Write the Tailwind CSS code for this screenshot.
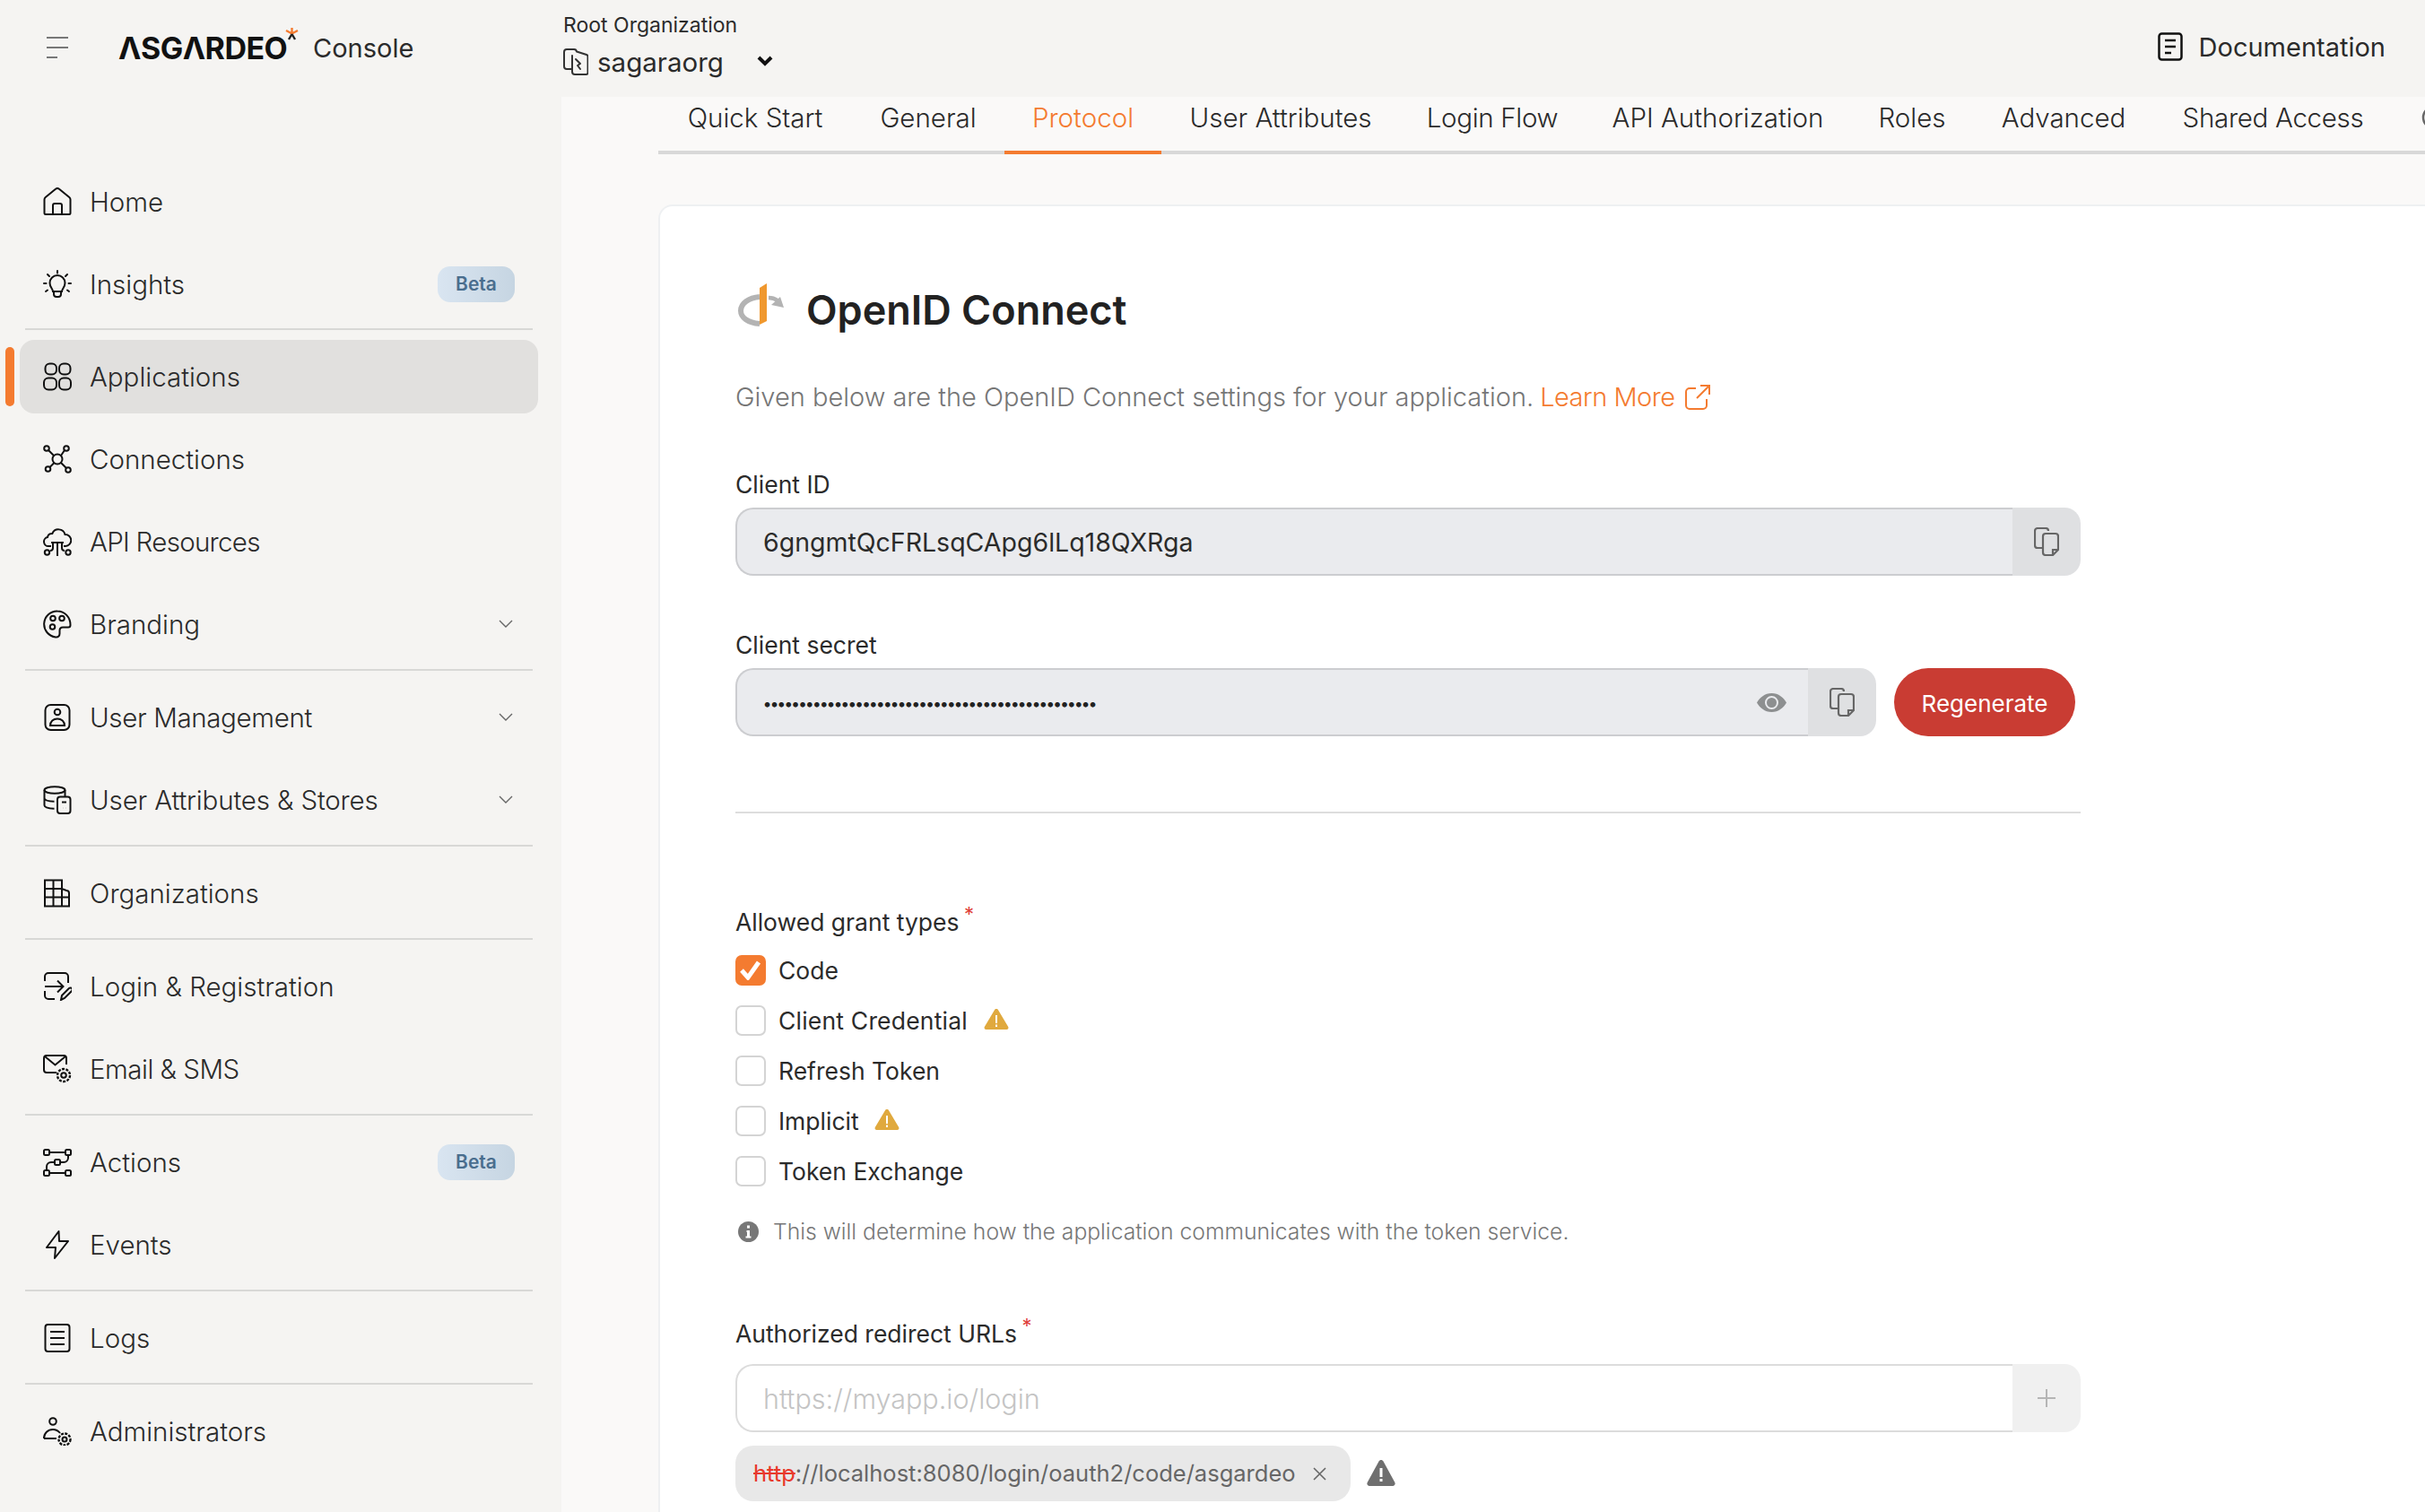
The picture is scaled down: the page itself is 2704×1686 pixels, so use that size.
<!DOCTYPE html>
<html lang="en">
<head>
    <meta charset="UTF-8">
    <title>Asgardeo Console</title>
    <script src="https://cdn.jsdelivr.net/npm/@tailwindcss/browser@4"></script>
</head>
<body class="bg-[#f5f4f2] font-['Inter',sans-serif] font-light text-[#2b2b2b] antialiased">
<div class="w-[2704px] h-[1686px] overflow-hidden flex flex-col">

    <!-- Top bar -->
    <header class="h-[108px] shrink-0 flex">
        <div class="w-[628px] shrink-0 flex items-center pl-[52px]">
            <div class="w-[24px] flex flex-col gap-[9px] mt-[-2px]">
                <span class="block h-[2px] w-[24px] bg-[#777]"></span>
                <span class="block h-[2px] w-[24px] bg-[#777]"></span>
                <span class="block h-[2px] w-[12px] bg-[#777]"></span>
            </div>
            <div class="relative ml-[56px] flex items-center">
                <span class="w-[190px] text-[34px] leading-none font-bold text-[#111] tracking-[-0.5px]" aria-label="Asgardeo">ΛSGΛRDEO</span>
                <svg class="absolute left-[186px] top-[-6px]" width="15" height="15" viewBox="0 0 15 15" fill="none" stroke-width="2.4"><path d="M7.5 0v7M1 3l6.5 3.5L14 3" stroke="#f47b30"/><path d="M7.5 7 4 13M7.5 7l3.500 6" stroke="#222"/></svg>
                <span class="ml-[27px] text-[29px] font-normal leading-none -mt-[2px]">Console</span>
            </div>
        </div>
        <div class="flex-1 flex justify-between">
            <div class="pt-[15px]">
                <div class="text-[23px] leading-[26px] font-normal">Root Organization</div>
                <div class="flex items-center mt-[13px]">
                    <svg width="28" height="30" viewBox="0 0 28 30" fill="none" stroke="#333" stroke-width="2" stroke-linecap="round" stroke-linejoin="round"><path d="M10 23H4a3 3 0 0 1-3-3V4a3 3 0 0 1 3-3h8a3 3 0 0 1 3 2.500l11 3.500c1 .3 1.500 1 1.500 2v18a2 2 0 0 1-2 2H13a3 3 0 0 1-3-3V8"/><path d="M14 12l5 5-3 2 3 4"/></svg>
                    <span class="ml-[10px] text-[29.500px] leading-[30px] font-normal">sagaraorg</span>
                    <svg class="ml-[37px] -mt-[2px]" width="18" height="12" viewBox="0 0 18 12" fill="none" stroke="#111" stroke-width="4"><path d="M2 2l7 7 7-7"/></svg>
                </div>
            </div>
            <div class="flex items-center pr-[44px] pb-[4px]">
                <svg width="28" height="32" viewBox="0 0 28 32" fill="none" stroke="#111" stroke-width="2.500"><rect x="1.500" y="1.500" width="25" height="29" rx="3"/><path d="M8 9h12M8 16h12M8 23h7"/></svg>
                <span class="ml-[18px] text-[29px] font-normal leading-none">Documentation</span>
            </div>
        </div>
    </header>

    <div class="flex-1 flex min-h-0">
        <!-- Sidebar -->
        <aside class="w-[626px] shrink-0 pt-[76px] pl-[22px] text-[29.500px]">
            <nav class="w-[578px] flex flex-col">
                <a class="h-[82px] flex items-center pl-[26px]">
                    <svg class="w-[32px] h-[32px] mr-[20px]" viewBox="0 0 32 32" fill="none" stroke="#111" stroke-width="2"><path d="M1.500 28.500V13.500c0-1 .4-1.800 1.200-2.500L14 1.800a3 3 0 0 1 4 0L29.300 11c.8.7 1.200 1.500 1.200 2.500v15a1.500 1.500 0 0 1-1.500 1.500H3a1.500 1.500 0 0 1-1.500-1.500z"/><path d="M11 30V20a2 2 0 0 1 2-2h6a2 2 0 0 1 2 2v10"/></svg>
                    <span>Home</span>
                </a>
                <a class="h-[82px] mt-[10px] flex items-center pl-[26px] pr-[26px]">
                    <svg class="w-[32px] h-[32px] mr-[20px]" viewBox="0 0 32 32" fill="none" stroke="#111" stroke-width="2" stroke-linecap="round"><path d="M11 24c0-3-3.500-4.500-3.500-9.500a8.500 8.500 0 0 1 17 0C24.500 19.500 21 21 21 24z"/><path d="M12 24v3a3 3 0 0 0 3 3h2a3 3 0 0 0 3-3v-3M16 1v2.500M5 5l2 2M27 5l-2 2M1 15h2.500M28.500 15H31M3 24l2-1.500M29 24l-2-1.500"/></svg>
                    <span class="flex-1">Insights</span>
                    <span class="w-[86px] h-[40px] rounded-[14px] bg-gradient-to-r from-[#d9e5f1] to-[#c6d5e2] flex items-center justify-center text-[21px] font-semibold text-[#4a6e8e]">Beta</span>
                </a>
                <div class="h-[2px] ml-[6px] w-[566px] bg-[#d8d8d6] mt-[8px] mb-[11px]"></div>
                <a class="relative h-[82px] flex items-center pl-[26px] rounded-[16px] bg-[#e1e0de]">
                    <span class="absolute left-[-16px] top-[8px] w-[10px] h-[66px] rounded-[5px] bg-[#f47b30]"></span>
                    <svg class="w-[32px] h-[32px] mr-[20px]" viewBox="0 0 32 32" fill="none" stroke="#111" stroke-width="2"><rect x="2.500" y="1.500" width="12.500" height="12" rx="5"/><rect x="18" y="1.500" width="12.500" height="12" rx="5"/><rect x="1" y="17.500" width="14" height="13" rx="5"/><rect x="18" y="17.500" width="13" height="13" rx="5"/></svg>
                    <span>Applications</span>
                </a>
                <a class="h-[82px] mt-[10px] flex items-center pl-[26px]">
                    <svg class="w-[32px] h-[32px] mr-[20px]" viewBox="0 0 32 32" fill="none" stroke="#111" stroke-width="2"><circle cx="16" cy="16" r="5.500"/><circle cx="4" cy="4" r="2.800"/><circle cx="26" cy="4" r="2.800"/><circle cx="5.500" cy="27" r="2.800"/><circle cx="28" cy="28" r="2.800"/><path d="M6 6l6 6M24 6l-4 6M7.500 25l5-5M26 26l-6-6"/></svg>
                    <span>Connections</span>
                </a>
                <a class="h-[82px] mt-[10px] flex items-center pl-[26px]">
                    <svg class="w-[32px] h-[32px] mr-[20px]" viewBox="0 0 32 32" fill="none" stroke="#111" stroke-width="2"><path d="M9 21H6a5 5 0 0 1-1-9.900 5 5 0 0 1 5-4.100h.3A7.500 7.500 0 0 1 24.500 8 6.500 6.500 0 0 1 25 21h-2"/><path d="M9 17h14M16 17v15M11 17v6a3 3 0 0 1-3 3M21 17v6a3 3 0 0 0 3 3"/><circle cx="4.500" cy="28" r="2.700"/><circle cx="28" cy="28" r="2.700"/></svg>
                    <span class="tracking-[-0.7px]">API Resources</span>
                </a>
                <a class="h-[82px] mt-[10px] flex items-center pl-[26px] pr-[28px]">
                    <svg class="w-[32px] h-[32px] mr-[20px]" viewBox="0 0 32 32" fill="none" stroke="#111" stroke-width="2"><path d="M16 1.500a14.500 14.500 0 0 0-2 28.900c3 .4 4.500-1.400 4.500-3.900v-3.500c0-2 1.500-3.500 3.500-3.500h6c1.500 0 2.500-1 2.500-2.500C30.500 8 24 1.500 16 1.500z"/><circle cx="11" cy="9.500" r="2.800"/><circle cx="21" cy="9.500" r="2.800"/><circle cx="10.500" cy="19" r="2.800"/></svg>
                    <span class="flex-1">Branding</span>
                    <svg width="16" height="10" viewBox="0 0 16 10" fill="none" stroke="#666" stroke-width="1.400"><path d="M1 1l7 7 7-7"/></svg>
                </a>
                <div class="h-[2px] ml-[6px] w-[566px] bg-[#d8d8d6] mt-[9px] mb-[11px]"></div>
                <a class="h-[82px] flex items-center pl-[26px] pr-[28px]">
                    <svg class="w-[32px] h-[32px] mr-[20px]" viewBox="0 0 32 32" fill="none" stroke="#111" stroke-width="2"><rect x="2.500" y="2" width="27" height="28" rx="6"/><circle cx="16" cy="10" r="3.300"/><path d="M8 25c0-4.500 3.500-7.500 8-7.500s8 3 8 7.500z"/></svg>
                    <span class="flex-1 tracking-[-0.35px]">User Management</span>
                    <svg width="16" height="10" viewBox="0 0 16 10" fill="none" stroke="#666" stroke-width="1.400"><path d="M1 1l7 7 7-7"/></svg>
                </a>
                <a class="h-[82px] mt-[10px] flex items-center pl-[26px] pr-[28px]">
                    <svg class="w-[32px] h-[32px] mr-[20px]" viewBox="0 0 32 32" fill="none" stroke="#111" stroke-width="2"><ellipse cx="13" cy="5" rx="11.500" ry="3.800"/><path d="M24.500 5v7M1.500 5v17c0 2 3 3.300 11 3.800M1.500 14c0 2 4 3.500 11 3.800"/><rect x="16" y="12.500" width="14.500" height="18.500" rx="3"/><path d="M21 18.500h5M22 25h.100M25.500 25h.100"/></svg>
                    <span class="flex-1 tracking-[-0.15px]">User Attributes &amp; Stores</span>
                    <svg width="16" height="10" viewBox="0 0 16 10" fill="none" stroke="#666" stroke-width="1.400"><path d="M1 1l7 7 7-7"/></svg>
                </a>
                <div class="h-[2px] ml-[6px] w-[566px] bg-[#d8d8d6] mt-[9px] mb-[11px]"></div>
                <a class="h-[82px] flex items-center pl-[26px]">
                    <svg class="w-[32px] h-[32px] mr-[20px]" viewBox="0 0 32 32" fill="none" stroke="#111" stroke-width="2"><path d="M2 1.500h19V30.500H2zM2 11h19M2 20.500h19M11.500 1.500v29M21 11l5 2a3 3 0 0 1 3 3v14.500h-8M21 20.500h8"/></svg>
                    <span>Organizations</span>
                </a>
                <div class="h-[2px] ml-[6px] w-[566px] bg-[#d8d8d6] mt-[9px] mb-[11px]"></div>
                <a class="h-[82px] flex items-center pl-[26px]">
                    <svg class="w-[32px] h-[32px] mr-[20px]" viewBox="0 0 32 32" fill="none" stroke="#111" stroke-width="2"><path d="M2 10V5a4 4 0 0 1 4-4h18a4 4 0 0 1 4 4v7M2 21v5a4 4 0 0 0 4 4h7M2 16h20M16 9.500l6.500 6.500-6.500 6.500"/><path d="M20 31l1-5 8-8a2 2 0 0 1 3 3l-8 8z"/></svg>
                    <span>Login &amp; Registration</span>
                </a>
                <a class="h-[82px] mt-[10px] flex items-center pl-[26px]">
                    <svg class="w-[32px] h-[32px] mr-[20px]" viewBox="0 0 32 32" fill="none" stroke="#111" stroke-width="2"><path d="M15 20H4a3 3 0 0 1-3-3V4a3 3 0 0 1 3-3h19a3 3 0 0 1 3 3v7"/><path d="M2 2l11.500 9.500L25 2"/><circle cx="23" cy="23" r="2.800"/><circle cx="23" cy="23" r="7" stroke-width="2.400" stroke-dasharray="3 1.400"/></svg>
                    <span class="tracking-[-0.5px]">Email &amp; SMS</span>
                </a>
                <div class="h-[2px] ml-[6px] w-[566px] bg-[#d8d8d6] mt-[9px] mb-[11px]"></div>
                <a class="h-[82px] flex items-center pl-[26px] pr-[26px]">
                    <svg class="w-[32px] h-[32px] mr-[20px]" viewBox="0 0 32 32" fill="none" stroke="#111" stroke-width="2"><rect x="1" y="2" width="6" height="6" rx="1.500"/><rect x="25" y="2" width="6" height="6" rx="1.500"/><rect x="13" y="13" width="6" height="6" rx="1.500"/><rect x="1" y="25" width="6" height="6" rx="1.500"/><rect x="25" y="25" width="6" height="6" rx="1.500"/><path d="M7 5h18M7 28h18M28 8v3a5 5 0 0 1-5 5h-4M13 16H9a5 5 0 0 0-5 5v4"/></svg>
                    <span class="flex-1">Actions</span>
                    <span class="w-[86px] h-[40px] rounded-[14px] bg-gradient-to-r from-[#d9e5f1] to-[#c6d5e2] flex items-center justify-center text-[21px] font-semibold text-[#4a6e8e]">Beta</span>
                </a>
                <a class="h-[82px] mt-[10px] flex items-center pl-[26px]">
                    <svg class="w-[32px] h-[32px] mr-[20px]" viewBox="0 0 32 32" fill="none" stroke="#111" stroke-width="2" stroke-linejoin="round"><path d="M17.500 1L4 19h10l-1 12 15-19H18z"/></svg>
                    <span>Events</span>
                </a>
                <div class="h-[2px] ml-[6px] w-[566px] bg-[#d8d8d6] mt-[9px] mb-[11px]"></div>
                <a class="h-[82px] flex items-center pl-[26px]">
                    <svg class="w-[32px] h-[32px] mr-[20px]" viewBox="0 0 32 32" fill="none" stroke="#111" stroke-width="2"><rect x="2.500" y="1" width="27" height="30" rx="3"/><path d="M8 9h16M8 16h16M8 23h16"/></svg>
                    <span>Logs</span>
                </a>
                <div class="h-[2px] ml-[6px] w-[566px] bg-[#d8d8d6] mt-[9px] mb-[11px]"></div>
                <a class="h-[82px] flex items-center pl-[26px]">
                    <svg class="w-[32px] h-[32px] mr-[20px]" viewBox="0 0 32 32" fill="none" stroke="#111" stroke-width="2"><circle cx="11" cy="5" r="3.800"/><path d="M1 24c0-6 4.500-10 10-10 3.500 0 6 1.500 8 4M1 24h14"/><circle cx="24" cy="25" r="2.500"/><circle cx="24" cy="25" r="6.500" stroke-width="2.400" stroke-dasharray="3 1.300"/></svg>
                    <span>Administrators</span>
                </a>
            </nav>
        </aside>

        <!-- Main -->
        <main class="flex-1 min-w-0 bg-[#faf9f8] pl-[108px] flex flex-col">
            <div class="h-[64px] shrink-0 flex border-b-[4px] border-[#d8d8d8] text-[29.500px] whitespace-nowrap">
                <a class="w-[216px] shrink-0 flex items-center justify-center pb-[14px]">Quick Start</a>
                <a class="w-[170px] shrink-0 flex items-center justify-center pb-[14px]">General</a>
                <a class="w-[175px] shrink-0 h-[64px] flex items-center justify-center pb-[14px] text-[#f47b30] border-b-[4px] border-[#f47b30]">Protocol</a>
                <a class="w-[266px] shrink-0 flex items-center justify-center pb-[14px]">User Attributes</a>
                <a class="w-[206px] shrink-0 flex items-center justify-center pb-[14px] tracking-[-0.3px]">Login Flow</a>
                <a class="w-[297px] shrink-0 flex items-center justify-center pb-[14px]">API Authorization</a>
                <a class="w-[136px] shrink-0 flex items-center justify-center pb-[14px]">Roles</a>
                <a class="w-[202px] shrink-0 flex items-center justify-center pb-[14px]">Advanced</a>
                <a class="w-[265px] shrink-0 flex items-center justify-center pb-[14px] tracking-[-0.3px]">Shared Access</a>
                <a class="pl-[33px] shrink-0 flex items-center pb-[14px]">
                    <svg width="28" height="28" viewBox="0 0 28 28" fill="none" stroke="#666" stroke-width="2.500"><circle cx="14" cy="14" r="12"/></svg>
                </a>
            </div>

            <section class="mt-[56px] -mr-[40px] flex-1 bg-white rounded-tl-[16px] border-t-2 border-l-2 border-[#eef0f2] pl-[84px] pt-[91px] overflow-hidden">
                <div class="flex items-center h-[48px]">
                    <svg class="ml-[3px] -mt-[10px]" width="52" height="48" viewBox="0 0 52 48" fill="none"><path d="M24 15C12 16 3 22 3 30.500 3 38 11 44 24 45" stroke="#b3b3b3" stroke-width="6"/><path d="M34 16c3 0 7 1 10 3" stroke="#b3b3b3" stroke-width="4.500"/><path d="M51 27 37 24l10-9z" fill="#b3b3b3"/><path d="M24 5l8-5v42l-8 4z" fill="#f0982e"/></svg>
                    <h1 class="ml-[24px] text-[45px] font-semibold leading-none text-[#222]">OpenID Connect</h1>
                </div>
                <p class="mt-[58px] text-[29px] leading-[32px] text-[#767676] flex items-center">
                    Given below are the OpenID Connect settings for your application.
                    <span class="ml-[7px] text-[#f47b30] tracking-[-0.5px]">Learn More</span>
                    <svg class="ml-[11px]" width="28" height="28" viewBox="0 0 28 28" fill="none" stroke="#f47b30" stroke-width="2"><path d="M12 4H5a4 4 0 0 0-4 4v15a4 4 0 0 0 4 4h15a4 4 0 0 0 4-4v-7M17 1h10v10M27 1 13 15"/></svg>
                </p>

                <label class="block mt-[65px] text-[26.500px] leading-[32px] font-normal">Client ID</label>
                <div class="w-[1500px] h-[76px] mt-[10px] flex">
                    <div class="flex-1 flex items-center pl-[29px] pt-[2px] bg-[#eaebee] rounded-l-[20px] border-2 border-r-0 border-[#cccdd0] text-[28.500px] font-normal">6gngmtQcFRLsqCApg6lLq18QXRga</div>
                    <div class="w-[76px] flex items-center justify-center bg-[#dfe0e2] rounded-r-[18px]">
                        <svg width="28" height="32" viewBox="0 0 28 32" fill="none" stroke="#666" stroke-width="2.200"><path d="M9 23H4a3 3 0 0 1-3-3V4a3 3 0 0 1 3-3h9a3 3 0 0 1 3 3"/><path d="M10 10a3 3 0 0 1 3-3h11a3 3 0 0 1 3 3v15l-6 6h-8a3 3 0 0 1-3-3zM21 31v-6h6"/></svg>
                    </div>
                </div>

                <label class="block mt-[61px] text-[26.500px] leading-[32px] font-normal">Client secret</label>
                <div class="h-[76px] mt-[10px] flex">
                    <div class="w-[1196px] flex items-center pl-[29px] pr-[24px] bg-[#eaebee] rounded-l-[20px] border-2 border-r-0 border-[#cccdd0]">
                        <span class="flex-1 pt-[2px] text-[18px] tracking-[-1.17px] font-semibold text-[#222]">•••••••••••••••••••••••••••••••••••••••••••••••</span>
                        <svg width="33" height="21" viewBox="0 0 33 21" fill="#8d8f90"><path fill-rule="evenodd" d="M16.500 0C24 0 30 5 33 10.500 30 16 24 21 16.500 21S3 16 0 10.500C3 5 9 0 16.500 0zm0 3a7.500 7.500 0 1 0 0 15 7.500 7.500 0 0 0 0-15z"/><circle cx="16.500" cy="10.500" r="5.500"/></svg>
                    </div>
                    <div class="w-[76px] flex items-center justify-center bg-[#dfe0e2] rounded-r-[18px]">
                        <svg width="28" height="32" viewBox="0 0 28 32" fill="none" stroke="#666" stroke-width="2.200"><path d="M9 23H4a3 3 0 0 1-3-3V4a3 3 0 0 1 3-3h9a3 3 0 0 1 3 3"/><path d="M10 10a3 3 0 0 1 3-3h11a3 3 0 0 1 3 3v15l-6 6h-8a3 3 0 0 1-3-3zM21 31v-6h6"/></svg>
                    </div>
                    <button class="ml-[20px] w-[202px] pt-[2px] rounded-full bg-[#c93c33] text-white text-[26px] font-normal">Regenerate</button>
                </div>

                <div class="w-[1500px] h-[2px] bg-[#dddddd] mt-[84px]"></div>

                <div class="mt-[105px] text-[26.500px] leading-[32px] font-normal">Allowed grant types <sup class="text-[#e0413a] text-[22px] -ml-[2px]">*</sup></div>
                <div class="mt-[21px] flex flex-col gap-[22px] text-[26.500px] font-normal">
                    <div class="flex items-center h-[34px]">
                        <span class="w-[34px] h-[34px] rounded-[7px] bg-[#f47b30] flex items-center justify-center">
                            <svg width="24" height="22" viewBox="0 0 24 22" fill="none" stroke="#fff" stroke-width="5"><path d="M2 11l7 8L21 2"/></svg>
                        </span>
                        <span class="ml-[14px] pt-[1px]">Code</span>
                    </div>
                    <div class="flex items-center h-[34px]">
                        <span class="w-[34px] h-[34px] rounded-[7px] border-2 border-[#d4d4d4]"></span>
                        <span class="ml-[14px] pt-[1px] tracking-[0.2px]">Client Credential</span>
                        <svg class="ml-[18px] -mt-[3px]" width="28" height="23" viewBox="0 0 28 23"><path fill="#e0a93e" d="M14 0c1 0 1.700.5 2.200 1.400l11 18.500c.8 1.500-.2 3.100-1.800 3.100H2.600C1 23 0 21.400.8 19.900l11-18.500C12.300.5 13 0 14 0z"/><path fill="#fff" d="M13 7h2v9h-2zM13 17.500h2v2.500h-2z"/></svg>
                    </div>
                    <div class="flex items-center h-[34px]">
                        <span class="w-[34px] h-[34px] rounded-[7px] border-2 border-[#d4d4d4]"></span>
                        <span class="ml-[14px] pt-[1px]">Refresh Token</span>
                    </div>
                    <div class="flex items-center h-[34px]">
                        <span class="w-[34px] h-[34px] rounded-[7px] border-2 border-[#d4d4d4]"></span>
                        <span class="ml-[14px] pt-[1px]">Implicit</span>
                        <svg class="ml-[17px] -mt-[3px]" width="28" height="23" viewBox="0 0 28 23"><path fill="#e0a93e" d="M14 0c1 0 1.700.5 2.200 1.400l11 18.500c.8 1.500-.2 3.100-1.800 3.100H2.600C1 23 0 21.400.8 19.900l11-18.500C12.300.5 13 0 14 0z"/><path fill="#fff" d="M13 7h2v9h-2zM13 17.500h2v2.500h-2z"/></svg>
                    </div>
                    <div class="flex items-center h-[34px]">
                        <span class="w-[34px] h-[34px] rounded-[7px] border-2 border-[#d4d4d4]"></span>
                        <span class="ml-[14px] pt-[1px]">Token Exchange</span>
                    </div>
                </div>
                <div class="mt-[36px] flex items-center text-[24.700px] leading-[28px] text-[#777]">
                    <svg class="ml-[3px]" width="23" height="23" viewBox="0 0 23 23"><circle cx="11.500" cy="11.500" r="11.500" fill="#777"/><path fill="#fff" d="M9.500 10h3.500v6.500h1.500V18.500h-6V16.500h1.500V12H9.500zM10 4.500h3v3h-3z"/></svg>
                    <span class="ml-[16px]">This will determine how the application communicates with the token service.</span>
                </div>

                <div class="mt-[84px] text-[26.500px] leading-[32px] font-normal">Authorized redirect URLs <sup class="text-[#e0413a] text-[22px] -ml-[2px]">*</sup></div>
                <div class="w-[1500px] h-[76px] mt-[18px] flex">
                    <div class="flex-1 flex items-center pl-[29px] pt-[2px] bg-white rounded-l-[20px] border-2 border-r-0 border-[#dcdcdc] text-[30.500px] text-[#c4c4c4]">https://myapp.io/login</div>
                    <div class="w-[76px] flex items-center justify-center bg-[#f0f0f0] rounded-r-[18px]">
                        <svg width="20" height="20" viewBox="0 0 20 20" stroke="#b5b5b5" stroke-width="2"><path d="M10 0v20M0 10h20"/></svg>
                    </div>
                </div>
                <div class="mt-[15px] flex items-center">
                    <div class="w-[686px] h-[62px] rounded-[20px] bg-[#e8e8e8] flex items-center pl-[20px] text-[25.500px] text-[#666] font-normal">
                        <span class="text-[#e8392c] line-through">http</span><span>://localhost:8080/login/oauth2/code/asgardeo</span>
                        <svg class="ml-auto mr-[27px]" width="15" height="15" viewBox="0 0 15 15" stroke="#666" stroke-width="1.600"><path d="M1 1l13 13M14 1 1 14"/></svg>
                    </div>
                    <svg class="ml-[18px] -mt-[2px]" width="32" height="29" viewBox="0 0 32 29"><path fill="#6f6f6f" d="M16 0c1 0 1.900.5 2.500 1.500l12.800 23.500c1 1.800-.2 4-2.300 4H3c-2.100 0-3.300-2.200-2.300-4L13.500 1.500C14.100.5 15 0 16 0z"/><path fill="#fff" d="M14.500 9h3v10h-3zM14.500 21h3v3h-3z"/></svg>
                </div>
            </section>
        </main>
    </div>
</div>
</body>
</html>
